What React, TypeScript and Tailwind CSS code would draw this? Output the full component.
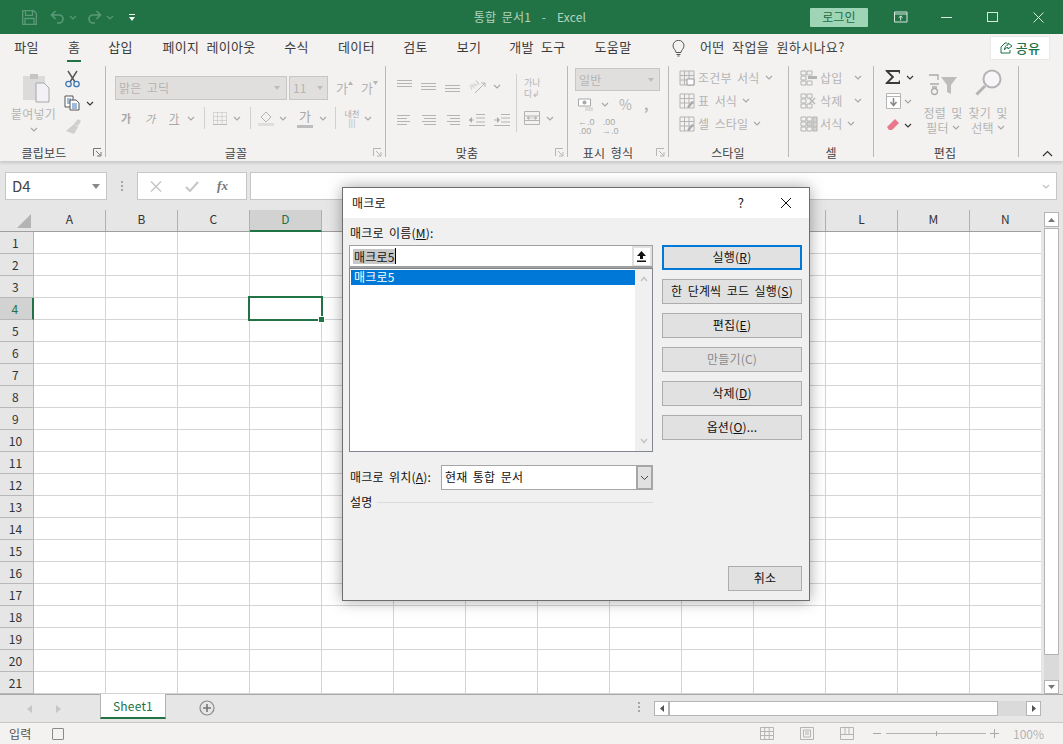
import React from "react";

const Chev = ({ c = "#a6a6a6", className = "" }: { c?: string; className?: string }) => (
  <svg width="8" height="5" viewBox="0 0 8 5" className={className}><path d="M1 1l3 3 3-3" fill="none" stroke={c} strokeWidth="1.1" /></svg>
);
const Launcher = ({ c = "#b5b5b5" }: { c?: string }) => (
  <svg width="9" height="9" viewBox="0 0 9 9"><path d="M.5 8V.5H8" fill="none" stroke={c} /><path d="M3 3l4.500 4.500M8 4v4H4" fill="none" stroke={c} /></svg>
);

const tabs: [string, number, number][] = [
  ["파일", 14, 25], ["홈", 29, 12], ["삽입", 28, 25], ["페이지 레이아웃", 28, 96], ["수식", 27, 25],
  ["데이터", 29, 37], ["검토", 28, 25], ["보기", 29, 24], ["개발 도구", 28, 57], ["도움말", 28, 38],
];

const Group = ({ w, label, labelW, launcher, children }: { w: number; label: string; labelW: number; launcher?: string; children: React.ReactNode }) => (
  <div className="flex h-full shrink-0" style={{ width: w }}>
    <div className="flex-1 flex flex-col min-w-0">
      <div className="h-[82px] min-w-0">{children}</div>
      <div className="h-[17px] flex items-center text-[12px] leading-[16px] text-[#444]">
        <span className="text-center whitespace-nowrap" style={{ width: labelW }}>{label}</span>
        {launcher && <span className="ml-auto mr-[3px] flex items-center"><Launcher c={launcher} /></span>}
      </div>
    </div>
    <div className="w-px bg-[#b9b9b9] my-[4px] shrink-0" />
  </div>
);

const AlignIcon = ({ offs }: { offs: number[] }) => (
  <div className="w-[15px] flex flex-col gap-[2px]">
    {offs.map((o, i) => <div key={i} className="h-px bg-[#b4b4b4]" style={{ marginLeft: o < 0 ? 0 : o, marginRight: o < 0 ? -o : 0 }} />)}
  </div>
);

const StyleRow = ({ icon, label }: { icon: React.ReactNode; label: string }) => (
  <div className="h-[23px] flex items-center text-[12px] text-[#b4b4b4] whitespace-nowrap">
    <span className="w-[16px] h-[16px] mr-[3px] flex items-center justify-center">{icon}</span>
    <span>{label}</span>
    <Chev className="ml-[5px]" />
  </div>
);

const GridIcon = ({ accent }: { accent?: boolean }) => (
  <svg width="16" height="16" viewBox="0 0 16 16">
    <path d="M1 1h14v14H1zM1 5.500h14M1 10h14M5.500 1v14M10 1v14" fill={accent ? "#ececec" : "none"} stroke="#b4b4b4" />
    {accent ? <path d="M8 9h7v6H8z" fill="#fff" stroke="#9a9a9a" /> : <path d="M8 14l5-6 2 1-5 6z" fill="#a8a8a8" />}
  </svg>
);

const CellIcon = ({ kind }: { kind: number }) => (
  <svg width="18" height="16" viewBox="0 0 18 16">
    <path d="M1 1h5v4H1zM7 1h5v4H7zM1 6h5v4H1zM1 11h5v4H1zM7 11h5v4H7z" fill="none" stroke="#b4b4b4" />
    {kind === 0 && <path d="M8 6h9v3H8z" fill="#b4b4b4" />}
    {kind === 1 && <path d="M9 5l6 6M15 5l-6 6" stroke="#b4b4b4" strokeWidth="1.300" />}
    {kind === 2 && <path d="M7 6h5v4H7zM13 1h4v14h-4zM13 6h4M13 11h4" fill="#d4d4d4" stroke="#b4b4b4" />}
  </svg>
);

const colLetters = "ABCDEFGHIJKLMN".split("");
const hiddenCols = "EFGHIJK";
const rowNums = Array.from({ length: 21 }, (_, i) => i + 1);

const DlgBtn = ({ children, primary, disabled }: { children: React.ReactNode; primary?: boolean; disabled?: boolean }) => (
  <div className={`w-[140px] h-[25px] mb-[9px] pb-[2px] flex items-center justify-center bg-[#e1e1e1] text-[12px] ${primary ? "border-2 border-[#0078d7]" : "border border-[#adadad]"} ${disabled ? "text-[#8a8a8a]" : "text-[#111]"}`}>
    {children}
  </div>
);

export default function App() {
  return (
    <div className="relative w-[1063px] h-[744px] overflow-hidden flex flex-col bg-[#e6e6e6] font-['Noto_Sans_CJK_KR',sans-serif] text-[#262626] tracking-[0.2px] [word-spacing:2.5px]">
      {/* Title bar */}
      <div className="h-[34px] bg-[#217346] flex items-center shrink-0 text-[12px] text-[#b3d3c1]">
        <svg width="15" height="15" viewBox="0 0 15 15" className="ml-[22px]"><path d="M.7.700h11l2.600 2.600v11H.7zM3.500.7v4.600h7V.7M3 14.300V8.500h9v5.800" fill="none" stroke="#5b9a78" strokeWidth="1.300" /></svg>
        <svg width="15" height="14" viewBox="0 0 15 14" className="ml-[13px]"><path d="M5.500 1L1.500 5l4 4M1.500 5H9a4 4 0 010 8H7" fill="none" stroke="#5b9a78" strokeWidth="1.600" /></svg>
        <Chev c="#5b9a78" className="ml-[4px]" />
        <svg width="15" height="14" viewBox="0 0 15 14" className="ml-[10px]"><path d="M9.500 1l4 4-4 4M13.500 5H6a4 4 0 000 8h2" fill="none" stroke="#5b9a78" strokeWidth="1.600" /></svg>
        <Chev c="#5b9a78" className="ml-[4px]" />
        <svg width="6" height="7" viewBox="0 0 6 7" className="ml-[15px]"><path d="M0 0h6v1H0zM0 3h6L3 7z" fill="#f2f7f4" /></svg>
        <span className="ml-[335px] w-[120px] whitespace-nowrap text-center">통합 문서1&nbsp; - &nbsp;Excel</span>
        <div className="ml-[220px] w-[58px] h-[19px] bg-[#9fd5b7] rounded-[1px] text-[#1d6b43] flex items-center justify-center">로그인</div>
        <svg width="16" height="12" viewBox="0 0 16 12" className="ml-[25px]"><path d="M.5.500h12.500v10H.5zM.5 2.500h12.500M6.700 9V4.500M4.800 6.300l1.900-2 1.900 2" fill="none" stroke="#d7e8de" transform="translate(1 .5)" /></svg>
        <div className="w-[11px] h-px bg-[#d7e8de] ml-[32px]" />
        <div className="w-[11px] h-[10px] border border-[#d7e8de] ml-[35px]" />
        <svg width="11" height="11" viewBox="0 0 11 11" className="ml-[35px]"><path d="M.5.500l10 10M10.500.5l-10 10" stroke="#d7e8de" /></svg>
      </div>

      {/* Tab row */}
      <div className="h-[28px] bg-[#f3f2f1] flex items-center shrink-0 text-[13px] text-[#3b3b3b] tracking-[0.3px] [word-spacing:4px]">
        {tabs.map(([t, ml, w], i) => (
          <div key={t} className="relative h-full flex items-center justify-center whitespace-nowrap pb-[2px]" style={{ marginLeft: ml, width: w }}>
            {t}
            {i === 1 && <div className="absolute -left-px -right-px bottom-[-1px] h-[3px] bg-[#217346]" />}
          </div>
        ))}
        <svg width="13" height="17" viewBox="0 0 13 17" className="ml-[40px]"><path d="M4 12.500C4 10 1 9 1 5.800a5.500 5.500 0 0111 0C12 9 9 10 9 12.500zM4.500 14.500h4M5.500 16h2" fill="none" stroke="#555" /></svg>
        <span className="ml-[15px] w-[146px] whitespace-nowrap text-[13px] tracking-[0.4px] text-[#444] pb-[2px]">어떤 작업을 원하시나요?</span>
        <div className="ml-[144px] w-[60px] h-[24px] bg-white border border-[#e8e8e8] text-[#217346] flex items-center justify-center gap-[3px] font-medium">
          <svg width="13" height="12" viewBox="0 0 13 12"><path d="M1 5v6h9V8M1 5l4-4h2M8 1l4 3-4 3V5.500c-2 0-3 1-3.500 2.500C4.500 5 6 3 8 3z" fill="none" stroke="#217346" /></svg>
          공유
        </div>
      </div>

      {/* Ribbon */}
      <div className="h-[99px] bg-[#f3f2f1] flex shrink-0 shadow-[0_2px_3px_rgba(0,0,0,0.14)] z-10">
        <Group w={106} label="클립보드" labelW={88} launcher="#777">
          <div className="flex">
            <div className="w-[67px] flex flex-col items-center pt-[10px] text-[12px] text-[#b4b4b4]">
              <svg width="28" height="31" viewBox="0 0 28 31" className="ml-[5px]"><path d="M1 4h22v24H1z" fill="#dcdbdc" /><path d="M8 2h8v5H8z" fill="#c4c4c4" /><path d="M14 11h8l5 5v14H14z" fill="#f3f1f5" stroke="#a6a6a6" /></svg>
              <span className="mt-[2px] leading-[18px] whitespace-nowrap">붙여넣기</span>
              <Chev className="mt-[4px]" />
            </div>
            <div className="flex flex-col pt-[8px] -ml-[3px]">
              <svg width="16" height="18" viewBox="0 0 16 18" className="ml-[1px]"><path d="M3 1l7 11M12 1L5 12" stroke="#555" strokeWidth="1.400" /><circle cx="3.500" cy="14" r="2.700" fill="none" stroke="#3f77b5" strokeWidth="1.300" /><circle cx="11.500" cy="14" r="2.700" fill="none" stroke="#3f77b5" strokeWidth="1.300" /></svg>
              <div className="flex items-center mt-[7px]">
                <svg width="16" height="16" viewBox="0 0 16 16"><path d="M1 1h8v11H1z" fill="#fff" stroke="#555" /><path d="M3 4h4M3 6h4M3 8h4" stroke="#3f77b5" /><path d="M6 5h6l3 3v7H6z" fill="#fff" stroke="#555" /><path d="M8 9h5M8 11h5M8 13h5" stroke="#3f77b5" /></svg>
                <Chev c="#333" className="ml-[6px]" />
              </div>
              <svg width="18" height="18" viewBox="0 0 18 18" className="mt-[7px]"><path d="M10 6l4-5 3 2-3 5zM10 6l4 3-4 7-8-3z" fill="#cfcfcf" /></svg>
            </div>
          </div>
        </Group>

        <Group w={280} label="글꼴" labelW={260} launcher="#b5b5b5">
          <div className="pl-[9px] pt-[14px] flex flex-col">
            <div className="flex items-center h-[24px] text-[12px] text-[#b4b4b4]">
              <div className="w-[172px] h-[24px] bg-[#e1dfdd] border border-[#c6c6c6] flex items-center pl-[3px] pr-[6px] justify-between">
                <span>맑은 고딕</span>
                <svg width="6" height="4" viewBox="0 0 6 4"><path d="M0 0h6L3 4z" fill="#bdbdbd" /></svg>
              </div>
              <div className="ml-[2px] w-[39px] h-[24px] bg-[#e1dfdd] border border-[#c6c6c6] flex items-center pl-[3px] pr-[4px] justify-between">
                <span>11</span>
                <svg width="6" height="4" viewBox="0 0 6 4"><path d="M0 0h6L3 4z" fill="#bdbdbd" /></svg>
              </div>
              <span className="ml-[8px] text-[13px] w-[12px]">가</span>
              <svg width="5" height="4" viewBox="0 0 5 4" className="mb-[10px]"><path d="M0 4h5L2.500 0z" fill="#b4b4b4" /></svg>
              <span className="ml-[8px] text-[13px] w-[12px]">가</span>
              <svg width="5" height="4" viewBox="0 0 5 4" className="mb-[10px]"><path d="M0 0h5L2.500 4z" fill="#b4b4b4" /></svg>
            </div>
            <div className="flex items-center h-[30px] mt-[3px] text-[11px] text-[#a8a8a8]">
              <span className="ml-[6px] font-bold w-[24px]">가</span>
              <span className="italic w-[24px]">가</span>
              <span className="w-[18px]"><span className="underline">가</span></span>
              <Chev className="ml-[0px]" />
              <div className="w-px h-[22px] bg-[#d0d0d0] ml-[9px]" />
              <svg width="14" height="13" viewBox="0 0 14 13" className="ml-[8px]"><path d="M.5.500h13v12H.5zM.5 4.500h13M.5 8.500h13M4.500.5v12M9 .5v12" fill="none" stroke="#bdbdbd" strokeDasharray="1 1" /><path d="M0 12.500h14" stroke="#bdbdbd" /></svg>
              <Chev className="ml-[6px]" />
              <div className="w-px h-[22px] bg-[#d0d0d0] ml-[9px]" />
              <svg width="16" height="16" viewBox="0 0 16 16" className="ml-[7px]"><path d="M8 2l5 5-5 5-5-5z" fill="#f3f2f1" stroke="#b4b4b4" /><path d="M0 13h16v3H0z" fill="#dedede" /></svg>
              <Chev className="ml-[5px]" />
              <span className="ml-[10px] w-[16px] h-[20px] text-[13px] text-center border-b-[3px] border-[#bdbdbd] leading-[15px]">가</span>
              <Chev className="ml-[6px]" />
              <div className="w-px h-[22px] bg-[#d0d0d0] ml-[8px]" />
              <span className="ml-[8px] w-[16px] text-[8px] leading-[9px] text-center">내천<br />|||</span>
              <Chev className="ml-[4px]" />
            </div>
          </div>
        </Group>

        <Group w={182} label="맞춤" labelW={162} launcher="#b5b5b5">
          <div className="flex h-full">
            <div className="flex flex-col pl-[11px] pt-[17px] w-[130px]">
              <div className="flex items-center h-[14px] gap-[9px]">
                <div className="mb-[5px]"><AlignIcon offs={[0, 0, 0]} /></div>
                <AlignIcon offs={[0, 0, 0]} />
                <div className="mt-[5px]"><AlignIcon offs={[0, 0, 0]} /></div>
                <svg width="17" height="14" viewBox="0 0 17 14" className="overflow-visible">
                  <text x="1" y="10" fontSize="6" fill="#b4b4b4" transform="rotate(-40 4 9)">가나</text>
                  <path d="M6 14L16 4M12 4h4v4" stroke="#b4b4b4" fill="none" />
                </svg>
                <Chev className="-ml-[2px]" />
              </div>
              <div className="flex items-center h-[14px] gap-[9px] mt-[20px]">
                <AlignIcon offs={[-2, -5, -2, -5]} />
                <AlignIcon offs={[1, 3, 1, 3]} />
                <AlignIcon offs={[2, 5, 2, 5]} />
                <div className="w-[16px] flex items-center"><svg width="16" height="12" viewBox="0 0 16 12"><path d="M7 .5h9M7 4h9M7 8h9M0 11.500h16M0 6h5" stroke="#b4b4b4" fill="none" /><path d="M0 6l3-3v6z" fill="#a8a8a8" /></svg></div>
                <div className="w-[16px] flex items-center"><svg width="16" height="12" viewBox="0 0 16 12"><path d="M7 .5h9M7 4h9M7 8h9M0 11.500h16M0 6h5" stroke="#b4b4b4" fill="none" /><path d="M6 6L3 3v6z" fill="#a8a8a8" /></svg></div>
              </div>
            </div>
            <div className="w-px h-[58px] mt-[12px] bg-[#d0d0d0]" />
            <div className="flex flex-col pl-[7px] pt-[14px] text-[9px] text-[#b4b4b4] tracking-normal">
              <span className="whitespace-nowrap leading-[13px] h-[13px]">가나</span>
              <span className="whitespace-nowrap leading-[13px] h-[13px] -mt-[2px]">다↲</span>
              <div className="flex items-center mt-[10px]">
                <svg width="16" height="16" viewBox="0 0 16 16"><path d="M.5 1.500h15v13H.5zM.5 6h15M.5 10.500h15" fill="none" stroke="#b4b4b4" /><path d="M3 8h10M3 8l2-1.500v3zM13 8l-2-1.500v3z" fill="#b4b4b4" stroke="#b4b4b4" strokeWidth=".6" /></svg>
                <Chev className="ml-[6px]" />
              </div>
            </div>
          </div>
        </Group>

        <Group w={101} label="표시 형식" labelW={80} launcher="#b5b5b5">
          <div className="pl-[7px] pt-[6px] flex flex-col">
            <div className="w-[85px] h-[23px] bg-[#e1dfdd] border border-[#c6c6c6] flex items-center justify-between pl-[3px] pr-[5px] text-[12px] text-[#b4b4b4]">
              일반<svg width="6" height="4" viewBox="0 0 6 4"><path d="M0 0h6L3 4z" fill="#bdbdbd" /></svg>
            </div>
            <div className="flex items-center h-[18px] mt-[4px] pl-[3px] text-[#b4b4b4]">
              <svg width="15" height="15" viewBox="0 0 15 15"><path d="M.5 2h12v7H.5z" fill="#fff" stroke="#a8a8a8" /><circle cx="6.500" cy="5.500" r="2" fill="#a8a8a8" /><path d="M7 10h8v4H7z" fill="#dcdcdc" /></svg>
              <Chev className="ml-[8px]" />
              <span className="ml-[10px] text-[14px] leading-none">%</span>
              <span className="ml-[12px] text-[14px] font-bold leading-none">,</span>
            </div>
            <div className="flex items-center h-[18px] mt-[5px] pl-[3px] text-[9px] leading-[9px] text-[#a8a8a8] text-center font-['Liberation_Sans',sans-serif] tracking-normal">
              <span className="w-[14px] whitespace-nowrap">←.0<br />.00</span>
              <span className="w-[14px] ml-[10px] whitespace-nowrap">.00<br />→.0</span>
            </div>
          </div>
        </Group>

        <Group w={120} label="스타일" labelW={118}>
          <div className="pl-[10px] pt-[4px]">
            <StyleRow icon={<GridIcon accent />} label="조건부 서식" />
            <StyleRow icon={<GridIcon />} label="표 서식" />
            <StyleRow icon={<GridIcon />} label="셀 스타일" />
          </div>
        </Group>

        <Group w={85} label="셀" labelW={86}>
          <div className="pl-[11px] pt-[4px] flex flex-col">
            {["삽입", "삭제", "서식"].map((t, i) => (
              <div key={t} className="h-[23px] flex items-center text-[12px] text-[#b4b4b4] whitespace-nowrap">
                <CellIcon kind={i} />
                <span className="ml-[2px]">{t}</span>
                <Chev className={i === 2 ? "ml-[5px]" : "ml-[12px]"} />
              </div>
            ))}
          </div>
        </Group>

        <Group w={145} label="편집" labelW={142}>
          <div className="flex pl-[11px] pt-[5px]">
            <div className="flex flex-col w-[36px]">
              <div className="flex items-center h-[20px]">
                <svg width="16" height="16" viewBox="0 0 16 16"><path d="M.5 1H15v3.500h-1.200V3H4.200l5 5-5 5h9.600v-1.500H15V15H.5v-1l6-6-6-6z" fill="#3a3a3a" /></svg>
                <Chev c="#333" className="ml-[5px]" />
              </div>
              <div className="flex items-center h-[18px] mt-[5px]">
                <svg width="15" height="16" viewBox="0 0 15 16" className="ml-[1px]"><path d="M.5.500h14v15H.5z" fill="#fff" stroke="#b4b4b4" /><path d="M.5 3.500h14" stroke="#b4b4b4" /><path d="M7.500 5v7M4.500 9l3 3.500 3-3.500" fill="none" stroke="#888" strokeWidth="1.500" /></svg>
                <Chev className="ml-[3px]" />
              </div>
              <div className="flex items-center h-[18px] mt-[6px]">
                <svg width="14" height="14" viewBox="0 0 14 14" className="ml-[1px]"><path d="M9 1l4 4-7 7H3L1 9z" fill="#e8788a" /></svg>
                <Chev c="#333" className="ml-[4px]" />
              </div>
            </div>
            <div className="flex flex-col items-center w-[44px] text-[12px] leading-[15px] text-[#b4b4b4] pt-[7px]">
              <svg width="30" height="22" viewBox="0 0 30 22"><path d="M1 1h9v5M2 10h9M4 13h5" stroke="#aaa" fill="none" strokeWidth="1.300" /><circle cx="6.500" cy="17.500" r="3" fill="none" stroke="#aaa" strokeWidth="1.300" /><path d="M13 3h16l-6 8v9l-4-2v-7z" fill="#bcbcbc" /></svg>
              <span className="mt-[9px] whitespace-nowrap">정렬 및</span>
              <span className="whitespace-nowrap flex items-center gap-[3px]">필터<Chev /></span>
            </div>
            <div className="flex flex-col items-center w-[44px] text-[12px] leading-[15px] text-[#b4b4b4] ml-[1px] pt-[2px]">
              <svg width="28" height="28" viewBox="0 0 28 28"><circle cx="18" cy="10" r="8.500" fill="#f7f5f9" stroke="#b4b4b4" strokeWidth="2" /><path d="M11 17l-8.500 8.500" stroke="#b4b4b4" strokeWidth="3" /></svg>
              <span className="mt-[8px] whitespace-nowrap">찾기 및</span>
              <span className="whitespace-nowrap flex items-center gap-[3px]">선택<Chev /></span>
            </div>
          </div>
        </Group>
        <div className="flex-1 flex items-end justify-end pr-[10px] pb-[4px]">
          <svg width="11" height="7" viewBox="0 0 11 7"><path d="M1 6l4.500-4.500L10 6" fill="none" stroke="#333" strokeWidth="1.200" /></svg>
        </div>
      </div>

      {/* Formula bar */}
      <div className="h-[48px] shrink-0 flex items-start pt-[11px] pl-[5px]">
        <div className="w-[102px] h-[28px] bg-white border border-[#c6c6c6] flex items-center justify-between pl-[6px] pr-[6px] text-[15px] text-[#444] tracking-normal">
          <span>D4</span>
          <svg width="8" height="5" viewBox="0 0 8 5"><path d="M0 0h8L4 5z" fill="#888" /></svg>
        </div>
        <div className="w-[30px] h-[28px] flex flex-col items-center justify-center gap-[2px]">
          {[0, 1, 2].map((i) => <div key={i} className="w-[2px] h-[2px] bg-[#a6a6a6]" />)}
        </div>
        <div className="w-[110px] h-[28px] bg-white border border-[#c6c6c6] flex items-center text-[#b4b4b4]">
          <svg width="12" height="11" viewBox="0 0 12 11" className="ml-[12px]"><path d="M1 .5l10 10M11 .5l-10 10" stroke="#c6c6c6" strokeWidth="1.500" /></svg>
          <svg width="14" height="11" viewBox="0 0 14 11" className="ml-[23px]"><path d="M1 6l4 4 8-9" fill="none" stroke="#c6c6c6" strokeWidth="2" /></svg>
          <span className="ml-[18px] text-[13px] italic font-bold text-[#777] font-['Liberation_Serif',serif]">fx</span>
        </div>
        <div className="ml-[3px] w-[807px] h-[28px] bg-white border border-[#c6c6c6] flex items-center justify-end pr-[6px]">
          <Chev c="#bdbdbd" />
        </div>
      </div>

      {/* Sheet */}
      <div className="flex h-[485px] shrink-0">
        <div className="relative w-[1041px] shrink-0 overflow-hidden">
          <div className="flex h-[23px] pt-px border-b border-[#9f9f9f]">
            <div className="w-[34px] shrink-0 flex items-end justify-end pr-[3px] pb-[3px]">
              <svg width="14" height="14" viewBox="0 0 14 14"><path d="M14 0v14H0z" fill="#b4b4b4" /></svg>
            </div>
            {colLetters.map((c) => (
              <div key={c} className={`w-[72px] shrink-0 flex items-center justify-center text-[12px] pb-[3px] border-r border-[#b0b0b0] ${c === "D" ? "bg-[#d2d2d2] text-[#217346] border-b-2 border-b-[#217346] -mb-px" : "text-[#333]"}`}>{hiddenCols.includes(c) ? "" : c}</div>
            ))}
          </div>
          {rowNums.map((r) => (
            <div key={r} className="flex h-[22px]">
              <div className={`w-[34px] shrink-0 flex items-center justify-center text-[12px] pr-[2px] border-b border-r border-[#b8b8b8] ${r === 4 ? "bg-[#d2d2d2] text-[#217346] border-r-2 border-r-[#217346]" : "text-[#333]"}`}>{r}</div>
              {colLetters.map((c) => <div key={c} className="w-[72px] shrink-0 bg-white border-r border-b border-[#d4d4d4]" />)}
            </div>
          ))}
          <div className="absolute left-[248px] top-[87px] w-[75px] h-[25px] border-2 border-[#217346]">
            <div className="absolute right-[-3px] bottom-[-3px] w-[5px] h-[5px] bg-[#217346] border border-white box-content -m-px" />
          </div>
        </div>
        {/* Vertical scrollbar */}
        <div className="ml-[3px] w-[15px] flex flex-col pt-[3px] h-[485px]">
          <div className="h-[15px] bg-white border border-[#b4b4b4] flex items-center justify-center shrink-0">
            <svg width="7" height="4" viewBox="0 0 7 4"><path d="M0 4h7L3.500 0z" fill="#777" /></svg>
          </div>
          <div className="h-[427px] bg-white border border-[#b4b4b4] mt-[1px] shrink-0" />
          <div className="flex-1 bg-[#dadada]" />
          <div className="h-[14px] bg-white border border-[#b4b4b4] flex items-center justify-center shrink-0">
            <svg width="7" height="4" viewBox="0 0 7 4"><path d="M0 0h7L3.500 4z" fill="#777" /></svg>
          </div>
        </div>
      </div>

      {/* Sheet tabs */}
      <div className="h-[29px] shrink-0 flex items-start border-b border-[#c6c6c6] border-t border-t-[#a8a8a8] w-[1063px] bg-[#e6e6e6]">
        <svg width="5" height="8" viewBox="0 0 5 8" className="ml-[27px] mt-[10px]"><path d="M5 0v8L0 4z" fill="#c6c6c6" /></svg>
        <svg width="5" height="8" viewBox="0 0 5 8" className="ml-[24px] mt-[10px]"><path d="M0 0v8l5-4z" fill="#c6c6c6" /></svg>
        <div className="ml-[39px] w-[66px] h-[25px] bg-white border-x border-[#b4b4b4] border-b-2 border-b-[#217346] text-[12px] text-[#217346] flex items-center justify-center -mt-px">Sheet1</div>
        <svg width="16" height="16" viewBox="0 0 16 16" className="ml-[33px] mt-[5px]"><circle cx="8" cy="8" r="7" fill="none" stroke="#8a8a8a" strokeWidth="1.200" /><path d="M8 4v8M4 8h8" stroke="#777" strokeWidth="1.600" /></svg>
        <div className="ml-[423px] mt-[7px] flex flex-col gap-[2px]">
          {[0, 1, 2].map((i) => <div key={i} className="w-[2px] h-[2px] bg-[#a6a6a6]" />)}
        </div>
        <div className="ml-[14px] mt-[6px] w-[15px] h-[15px] bg-white border border-[#b4b4b4] flex items-center justify-center">
          <svg width="4" height="7" viewBox="0 0 4 7"><path d="M4 0v7L0 3.500z" fill="#555" /></svg>
        </div>
        <div className="mt-[6px] w-[329px] h-[15px] bg-white border border-[#b4b4b4]" />
        <div className="mt-[6px] w-[28px] h-[15px] bg-[#dadada]" />
        <div className="mt-[6px] w-[15px] h-[15px] bg-white border border-[#b4b4b4] flex items-center justify-center">
          <svg width="4" height="7" viewBox="0 0 4 7"><path d="M0 0v7l4-3.500z" fill="#555" /></svg>
        </div>
      </div>

      {/* Status bar */}
      <div className="h-[21px] shrink-0 bg-[#f3f2f1] flex items-center text-[12px] text-[#555]">
        <span className="ml-[9px] w-[22px] whitespace-nowrap">입력</span>
        <div className="ml-[21px] w-[12px] h-[12px] border border-[#8a8a8a] rounded-[1px]" />
        <svg width="14" height="13" viewBox="0 0 14 13" className="ml-[696px]"><path d="M.5.500h13v12H.5zM.5 4.500h13M.5 8.500h13M4.700.5v12M9.200.5v12" fill="none" stroke="#b4b4b4" /></svg>
        <svg width="14" height="13" viewBox="0 0 14 13" className="ml-[26px]"><path d="M.5.500h13v12H.5z" fill="none" stroke="#b4b4b4" /><path d="M3.500 3h7v7h-7zM5 5h4M5 7h4" fill="none" stroke="#b4b4b4" /></svg>
        <svg width="14" height="13" viewBox="0 0 14 13" className="ml-[26px]"><path d="M.5.500h13v12H.5zM.5 7.500h13M5 .5v7M9 .5v7" fill="none" stroke="#b4b4b4" /></svg>
        <div className="ml-[19px] w-[8px] h-px bg-[#a8a8a8]" />
        <div className="relative ml-[5px] w-[100px] h-px bg-[#b4b4b4]"><div className="absolute left-[50px] -top-[2px] w-px h-[5px] bg-[#a8a8a8]" /></div>
        <svg width="9" height="9" viewBox="0 0 9 9" className="ml-[4px]"><path d="M4.500 0v9M0 4.500h9" stroke="#a8a8a8" /></svg>
        <span className="ml-[14px] text-[#b4b4b4] tracking-normal">100%</span>
      </div>

      {/* Dialog */}
      <div className="absolute left-[342px] top-[187px] w-[468px] h-[414px] bg-[#f0f0f0] border border-[#6e6e6e] shadow-[0_0_14px_rgba(0,0,0,0.35)] flex flex-col text-[12px] text-[#111]">
        <div className="h-[30px] bg-white flex items-center shrink-0">
          <span className="ml-[9px]">매크로</span>
          <span className="ml-auto text-[13px]">?</span>
          <svg width="12" height="12" viewBox="0 0 12 12" className="ml-[36px] mr-[17px]"><path d="M1 1l10 10M11 1L1 11" stroke="#111" /></svg>
        </div>
        <div className="flex-1 flex flex-col pl-[6px] pr-[7px]">
          <div className="flex flex-1">
            <div className="w-[304px] flex flex-col">
              <div className="h-[27px] flex items-end pl-[1px] pb-[4px] leading-[16px]">매크로 이름(<u>M</u>):</div>
              <div className="h-[23px] border border-[#a0a0a0] border-b-2 flex bg-white">
                <div className="flex-1 flex items-center pl-[3px]">
                  <span className="bg-[#c8c8c8] text-[#111] pl-px leading-[15px]">매크로5</span>
                  <span className="w-px h-[16px] bg-black" />
                </div>
                <div className="w-[20px] bg-[#e1e1e1] border-[2px] border-l-[1px] border-[#e1e1e1] flex items-center justify-center">
                  <div className="w-[16px] h-[17px] bg-white flex items-center justify-center">
                    <svg width="9" height="11" viewBox="0 0 9 11"><path d="M4.500 0L9 5H6v3H3V5H0zM0 9.500h9V11H0z" fill="#111" /></svg>
                  </div>
                </div>
              </div>
              <div className="h-[184px] border border-[#82878f] bg-white flex">
                <div className="flex-1 pt-[1px] pl-[1px]">
                  <div className="h-[15px] bg-[#0078d7] text-white pl-[3px] leading-[13px]">매크로5</div>
                </div>
                <div className="w-[17px] bg-[#f0f0f0] flex flex-col items-center justify-between py-[7px]">
                  <svg width="8" height="6" viewBox="0 0 8 6"><path d="M1 5l3-3.500L7 5" fill="none" stroke="#c4c4c4" strokeWidth="1.500" /></svg>
                  <svg width="8" height="6" viewBox="0 0 8 6"><path d="M1 1l3 3.500L7 1" fill="none" stroke="#c4c4c4" strokeWidth="1.500" /></svg>
                </div>
              </div>
              <div className="mt-[13px] h-[25px] flex items-center">
                <span className="pl-[1px] pb-[2px] whitespace-nowrap w-[92px]">매크로 위치(<u>A</u>):</span>
                <div className="flex-1 h-[25px] bg-white border border-[#a6a6a6] flex items-center">
                  <span className="flex-1 pl-[3px] pb-[2px]">현재 통합 문서</span>
                  <div className="w-[17px] h-[25px] -my-px -mr-px bg-[#e1e1e1] border-2 border-[#a6a6a6] flex items-center justify-center">
                    <svg width="9" height="6" viewBox="0 0 9 6"><path d="M1 1l3.500 3.500L8 1" fill="none" stroke="#444" /></svg>
                  </div>
                </div>
              </div>
              <div className="mt-[2px] h-[20px] flex items-center pl-[1px]">
                <span className="whitespace-nowrap">설명</span>
                <div className="flex-1 h-px bg-[#dcdcdc] ml-[5px]" />
              </div>
            </div>
            <div className="ml-[9px] pt-[27px] flex flex-col">
              <DlgBtn primary><span>실행(<u>R</u>)</span></DlgBtn>
              <DlgBtn><span>한 단계씩 코드 실행(<u>S</u>)</span></DlgBtn>
              <DlgBtn><span>편집(<u>E</u>)</span></DlgBtn>
              <DlgBtn disabled><span>만들기(C)</span></DlgBtn>
              <DlgBtn><span>삭제(<u>D</u>)</span></DlgBtn>
              <DlgBtn><span>옵션(<u>O</u>)...</span></DlgBtn>
            </div>
          </div>
          <div className="flex justify-end pb-[9px]">
            <div className="w-[74px] h-[25px] pb-[2px] bg-[#e1e1e1] border border-[#adadad] flex items-center justify-center">취소</div>
          </div>
        </div>
      </div>
    </div>
  );
}
